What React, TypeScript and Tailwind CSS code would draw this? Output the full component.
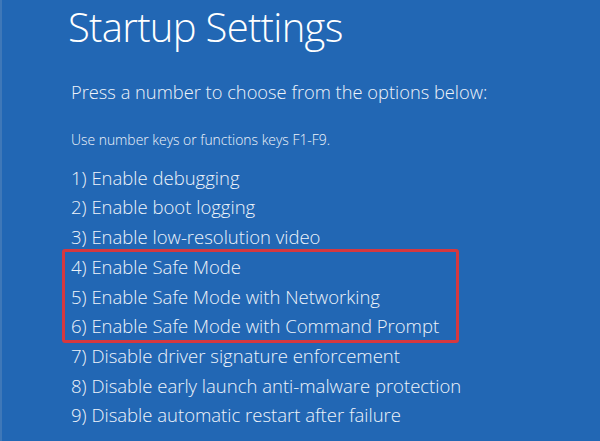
const options = [
  "1) Enable debugging",
  "2) Enable boot logging",
  "3) Enable low-resolution video",
  "4) Enable Safe Mode",
  "5) Enable Safe Mode with Networking",
  "6) Enable Safe Mode with Command Prompt",
  "7) Disable driver signature enforcement",
  "8) Disable early launch anti-malware protection",
  "9) Disable automatic restart after failure",
];

function Option({ label }: { label: string }) {
  return <div className="h-[29.4px] leading-[29.4px] whitespace-nowrap">{label}</div>;
}

export default function App() {
  const top = options.slice(0, 3);
  const boxed = options.slice(3, 6);
  const rest = options.slice(6);

  return (
    <div
      className="w-[600px] h-[441px] overflow-hidden bg-[#2267b4] text-[#eef3fa] border-l-2 border-[#3f78b8] flex flex-col pl-[66px]"
      style={{ fontFamily: '"Open Sans", "Noto Sans", sans-serif' }}
    >
      <h1 className="text-[40px] font-light leading-[52px] text-white mt-[1px] tracking-[-0.7px]">
        Startup Settings
      </h1>
      <p className="text-[18.3px] font-light leading-[24px] mt-[27px] ml-[3px]">
        Press a number to choose from the options below:
      </p>
      <p className="text-[13.9px] font-light leading-[18px] mt-[27px] ml-[3px]">
        Use number keys or functions keys F1-F9.
      </p>

      <div className="mt-[14px] text-[18.5px] font-light">
        <div className="pl-[3px]">
          {top.map((o) => (
            <Option key={o} label={o} />
          ))}
        </div>
        <div className="-ml-[6px] w-[397px] border-[3px] border-[#d6383f] rounded-[3px] pl-[6px] -my-[2px]">
          {boxed.map((o) => (
            <Option key={o} label={o} />
          ))}
        </div>
        <div className="pl-[3px]">
          {rest.map((o) => (
            <Option key={o} label={o} />
          ))}
        </div>
      </div>
    </div>
  );
}
